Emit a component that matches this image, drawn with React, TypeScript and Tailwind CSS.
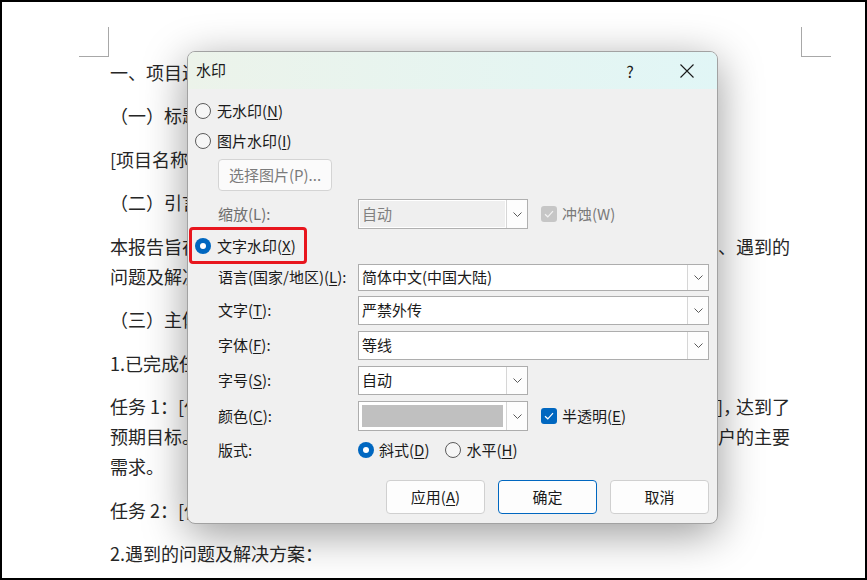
import React from 'react';

const docLine = 'flex h-[30px] items-center whitespace-nowrap';

function Chevron() {
  return (
    <svg width="9" height="5" viewBox="0 0 9 5">
      <path d="M0.5 0.5 L4.5 4.5 L8.5 0.5" stroke="#5a5a5a" strokeWidth="1" fill="none" />
    </svg>
  );
}

function Radio({ checked }: { checked?: boolean }) {
  if (checked) {
    return (
      <span className="flex h-[16px] w-[16px] shrink-0 items-center justify-center rounded-full bg-[#0067c0]">
        <span className="h-[6px] w-[6px] rounded-full bg-white" />
      </span>
    );
  }
  return <span className="h-[16px] w-[16px] shrink-0 rounded-full border border-[#5b5b5b] bg-[#f6f6f6]" />;
}

function Check({ disabled }: { disabled?: boolean }) {
  return (
    <span
      className={
        disabled
          ? 'flex h-[16px] w-[16px] shrink-0 items-center justify-center rounded-[3px] bg-[#c6c6c6]'
          : 'flex h-[16px] w-[16px] shrink-0 items-center justify-center rounded-[3px] bg-[#0067c0]'
      }
    >
      <svg width="10" height="8" viewBox="0 0 10 8">
        <path d="M1 4.2 L3.8 6.8 L9 1.2" stroke={disabled ? '#f2f2f2' : '#ffffff'} strokeWidth="1.2" fill="none" />
      </svg>
    </span>
  );
}

function Select({
  className,
  children,
  disabled,
}: {
  className: string;
  children?: React.ReactNode;
  disabled?: boolean;
}) {
  return (
    <div className={className}>
      <div
        className={
          disabled
            ? 'flex flex-1 items-center border border-white bg-[#efefef] pl-[2px] text-[#808080]'
            : 'flex flex-1 items-center bg-white pl-[3px] text-[#1a1a1a]'
        }
      >
        {children}
      </div>
      <div className="flex w-[21px] items-center justify-center border-l border-[#d6d6d6] bg-[#fdfdfd]">
        <Chevron />
      </div>
    </div>
  );
}

function Label({ children, dim }: { children: React.ReactNode; dim?: boolean }) {
  return <span className={dim ? 'w-[140px] shrink-0 text-[#6f6f6f]' : 'w-[140px] shrink-0'}>{children}</span>;
}

function Btn({ children, primary }: { children: React.ReactNode; primary?: boolean }) {
  return (
    <div
      className={
        primary
          ? 'flex h-[34px] w-[99px] items-center justify-center rounded-[4px] border border-[#0067c0] bg-[#fdfdfd]'
          : 'flex h-[34px] w-[99px] items-center justify-center rounded-[4px] border border-[#d0d0d0] bg-[#fdfdfd]'
      }
    >
      {children}
    </div>
  );
}

function Dialog() {
  return (
    <div className="absolute left-[185px] top-[49px] flex h-[473px] w-[531px] flex-col overflow-hidden rounded-[8px] border border-[#a2a2a2] bg-[#f0f0f0] text-[15px] text-[#1a1a1a] shadow-[0_10px_44px_rgba(0,0,0,0.4)]">
      <div className="flex h-[37px] shrink-0 items-center bg-gradient-to-r from-[#ecf3ea] to-[#e1f6f6] pl-[8px] pr-[10px]">
        <span>水印</span>
        <span className="ml-auto w-[40px] text-center text-[16px]">?</span>
        <span className="ml-[17px] flex w-[40px] items-center justify-center">
          <svg width="14" height="14" viewBox="0 0 14 14">
            <path d="M0.5 0.5 L13.5 13.5 M13.5 0.5 L0.5 13.5" stroke="#1a1a1a" strokeWidth="1.1" />
          </svg>
        </span>
      </div>

      <div className="flex flex-col pl-[7px] pr-[8px] pt-[7px]">
        <div className="flex h-[30px] items-center gap-[6px]">
          <Radio />
          <span>
            无水印(<u className="underline-offset-2">N</u>)
          </span>
        </div>
        <div className="flex h-[30px] items-center gap-[6px]">
          <Radio />
          <span>
            图片水印(<u className="underline-offset-2">I</u>)
          </span>
        </div>
        <div className="mt-[3px] pl-[23px]">
          <div className="flex h-[32px] w-[114px] items-center justify-center rounded-[4px] border border-[#d4d4d4] bg-[#fbfbfb] text-[#7b7b7b]">
            选择图片(P)...
          </div>
        </div>
        <div className="mt-[8px] flex h-[30px] items-center pl-[23px]">
          <Label dim>缩放(L):</Label>
          <Select disabled className="flex h-[30px] w-[170px] border border-[#b0b0b0]">
            自动
          </Select>
          <span className="ml-[13px] flex items-center gap-[5px] text-[#7a7a7a]">
            <Check disabled />
            <span>冲蚀(W)</span>
          </span>
        </div>

        <div className="relative flex h-[34px] items-center gap-[6px]">
          <span className="absolute left-[-6px] top-[-2px] h-[37px] w-[118px] rounded-[4px] border-[3px] border-[#e8161e]" />
          <Radio checked />
          <span>
            文字水印(<u className="underline-offset-2">X</u>)
          </span>
        </div>

        <div className="mt-[1px] flex h-[27px] items-center pl-[23px]">
          <Label>
            语言(国家/地区)(<u className="underline-offset-2">L</u>):
          </Label>
          <Select className="flex h-[27px] flex-1 border border-[#adadad]">简体中文(中国大陆)</Select>
        </div>
        <div className="mt-[5px] flex h-[29px] items-center pl-[23px]">
          <Label>
            文字(<u className="underline-offset-2">T</u>):
          </Label>
          <Select className="flex h-[29px] flex-1 border border-[#adadad]">严禁外传</Select>
        </div>
        <div className="mt-[6px] flex h-[29px] items-center pl-[23px]">
          <Label>
            字体(<u className="underline-offset-2">F</u>):
          </Label>
          <Select className="flex h-[29px] flex-1 border border-[#adadad]">等线</Select>
        </div>
        <div className="mt-[6px] flex h-[29px] items-center pl-[23px]">
          <Label>
            字号(<u className="underline-offset-2">S</u>):
          </Label>
          <Select className="flex h-[29px] w-[170px] border border-[#adadad]">自动</Select>
        </div>
        <div className="mt-[6px] flex h-[30px] items-center pl-[23px]">
          <Label>
            颜色(<u className="underline-offset-2">C</u>):
          </Label>
          <div className="flex h-[30px] w-[170px] border border-[#adadad]">
            <div className="flex flex-1 items-center bg-white p-[3px]">
              <div className="h-full w-full bg-[#c0c0c0]" />
            </div>
            <div className="flex w-[21px] items-center justify-center border-l border-[#d6d6d6] bg-[#fdfdfd]">
              <Chevron />
            </div>
          </div>
          <span className="ml-[13px] flex items-center gap-[5px]">
            <Check />
            <span>
              半透明(<u className="underline-offset-2">E</u>)
            </span>
          </span>
        </div>
        <div className="mt-[4px] flex h-[30px] items-center pl-[23px]">
          <Label>版式:</Label>
          <span className="flex items-center gap-[5px]">
            <Radio checked />
            <span>
              斜式(<u className="underline-offset-2">D</u>)
            </span>
          </span>
          <span className="ml-[16px] flex items-center gap-[5px]">
            <Radio />
            <span>
              水平(<u className="underline-offset-2">H</u>)
            </span>
          </span>
        </div>

        <div className="mt-[15px] flex justify-end gap-[13px]">
          <Btn>
            应用(<u className="underline-offset-2">A</u>)
          </Btn>
          <Btn primary>确定</Btn>
          <Btn>取消</Btn>
        </div>
      </div>
    </div>
  );
}

export default function App() {
  return (
    <div className="relative box-border h-[580px] w-[867px] overflow-hidden border-2 border-black bg-white font-['Noto_Sans_CJK_SC','Noto_Sans',sans-serif]">
      <div className="flex justify-between pl-[77px] pr-[34px] pt-[25px]">
        <div className="h-[30px] w-[30px] border-b border-r border-[#a8a8a8]" />
        <div className="h-[30px] w-[30px] border-b border-l border-[#a8a8a8]" />
      </div>

      <div className="flex w-[788px] flex-col gap-[13.5px] pl-[108px] text-[18px] text-[#262626]">
        <div className={docLine}>一、项目进展概述</div>
        <div className={docLine}>（一）标题</div>
        <div className={docLine}>[项目名称]进展报告</div>
        <div className={docLine}>（二）引言</div>
        <div>
          <div className={docLine + ' justify-between'}>
            <span>本报告旨在总结项目近期的进展情况</span>
            <span>、遇到的</span>
          </div>
          <div className={docLine}>问题及解决方案，以及下一步的工作计划。</div>
        </div>
        <div className={docLine}>（三）主体内容</div>
        <div className={docLine}>1.已完成任务</div>
        <div>
          <div className={docLine + ' justify-between'}>
            <span>任务 1：[任务名称]</span>
            <span>
              ]<span className="inline-block w-[13px]">，</span>达到了
            </span>
          </div>
          <div className={docLine + ' justify-between'}>
            <span>预期目标。</span>
            <span>户的主要</span>
          </div>
          <div className={docLine}>需求。</div>
        </div>
        <div className={docLine}>任务 2：[任务名称]</div>
        <div className={docLine}>2.遇到的问题及解决方案：</div>
      </div>

      <Dialog />
    </div>
  );
}
